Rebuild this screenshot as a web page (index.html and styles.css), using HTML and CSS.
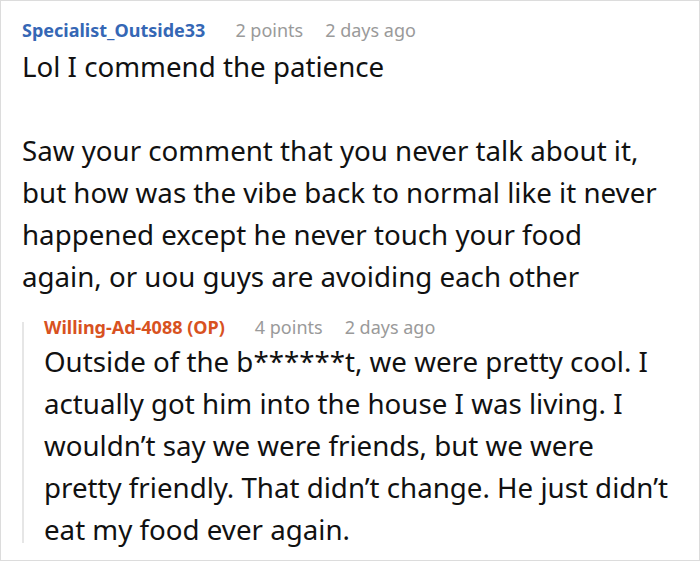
FILE: index.html
```html
<!DOCTYPE html>
<html lang="en">
<head>
<meta charset="utf-8">
<title>Comment thread</title>
<link rel="stylesheet" href="styles.css">
</head>
<body>
<div class="frame">
  <div class="comment">
    <div class="meta">
      <span class="user">Specialist_Outside33</span>
      <span class="info">2 points</span>
      <span class="info">2 days ago</span>
    </div>
    <div class="body">
      <p>Lol I commend the patience</p>
      <p>Saw your comment that you never talk about it, but how was the vibe back to normal like it never happened except he never touch your food again, or uou guys are avoiding each other</p>
    </div>
    <div class="reply">
      <div class="meta">
        <span class="user op">Willing-Ad-4088 (OP)</span>
        <span class="info">4 points</span>
        <span class="info">2 days ago</span>
      </div>
      <div class="body">
        <p>Outside of the b******t, we were pretty cool. I actually got him into the house I was living. I wouldn’t say we were friends, but we were pretty friendly. That didn’t change. He just didn’t eat my food ever again.</p>
      </div>
    </div>
  </div>
</div>
</body>
</html>
```
FILE: styles.css
```css
html, body {
  margin: 0;
  padding: 0;
  background: #fff;
}
.frame {
  box-sizing: border-box;
  width: 700px;
  height: 561px;
  border: 1px solid #dcdcdc;
  overflow: hidden;
  font-family: "Noto Sans", "Open Sans", sans-serif;
  color: #111;
}
.comment {
  padding: 17px 21px 0 21px;
}
.meta {
  display: flex;
  gap: 22px;
  font-size: 18px;
  line-height: 24px;
}
.user {
  font-weight: 700;
  color: #3567b5;
  margin-right: 8px;
}
.user.op {
  color: #d8521f;
}
.info {
  color: #9a9a9a;
}
.body {
  font-size: 27.7px;
  line-height: 42px;
}
.body p {
  margin: 0;
}
.body p + p {
  margin-top: 42px;
}
.comment > .body {
  margin-top: 3px;
  padding-right: 12px;
}
.reply {
  position: relative;
  margin-top: 18px;
  padding-left: 22px;
}
.reply::before {
  content: "";
  position: absolute;
  left: 0;
  top: 7px;
  bottom: 7px;
  width: 2px;
  background: #e6e6e6;
}
.reply > .body {
  margin-top: 1px;
}
```
